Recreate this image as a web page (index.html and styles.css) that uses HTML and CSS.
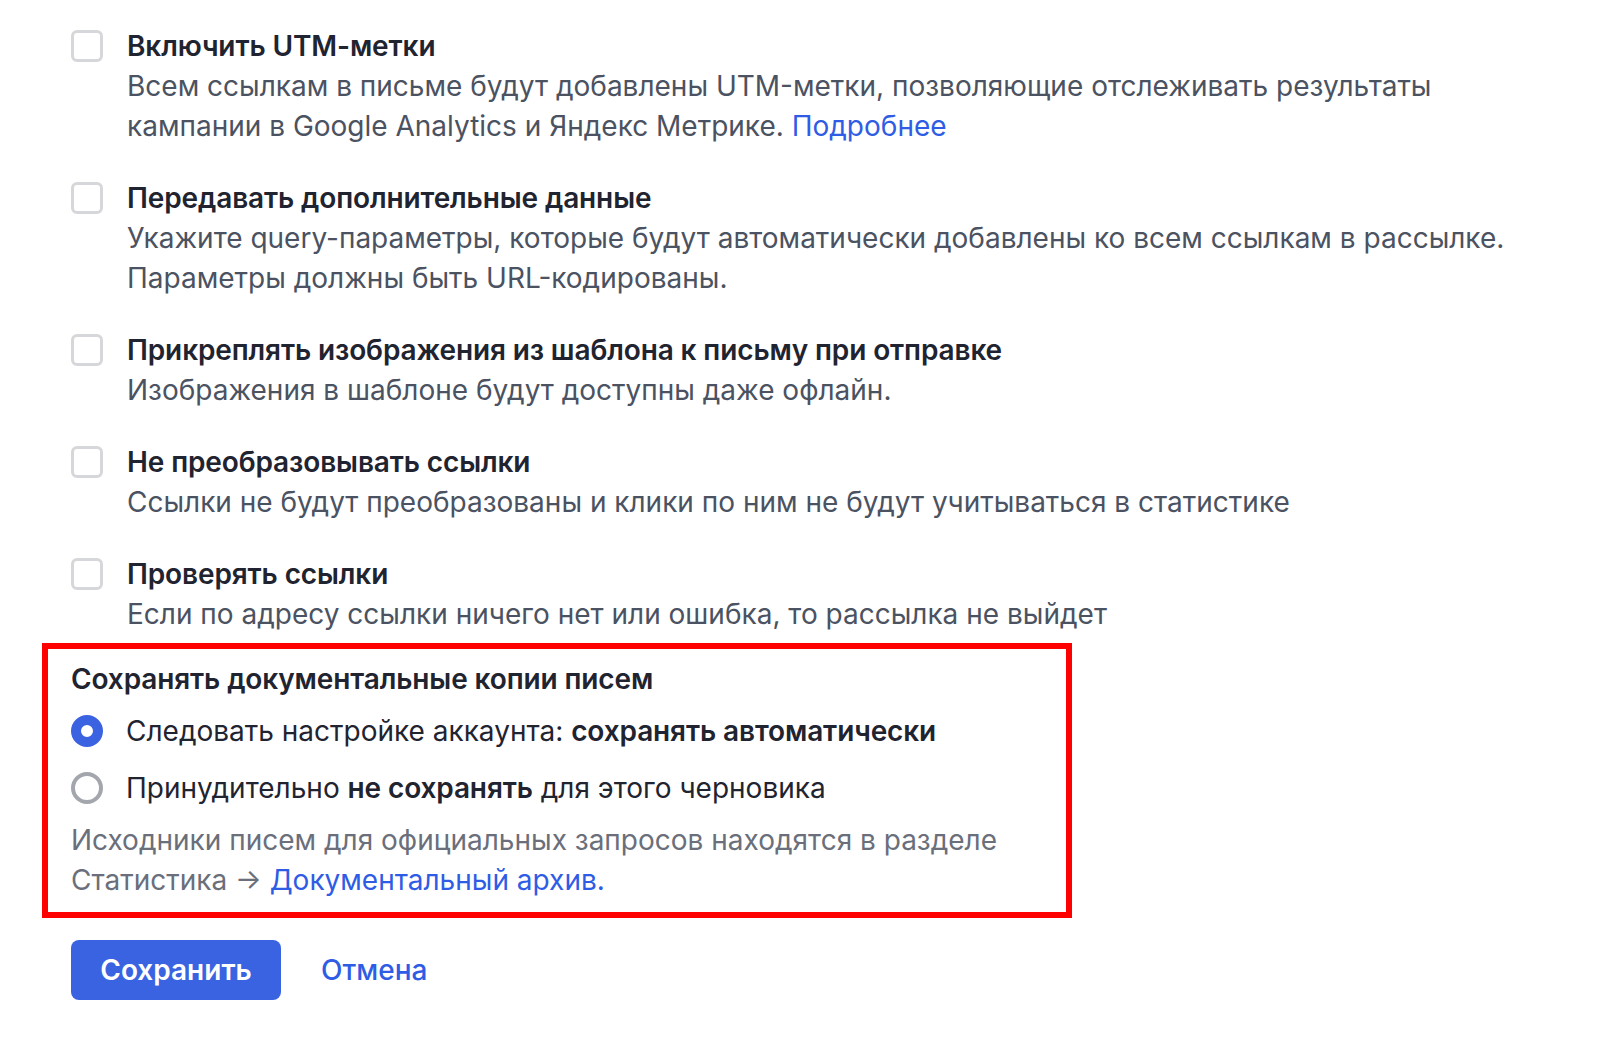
FILE: index.html
```html
<!DOCTYPE html>
<html lang="ru">
<head>
<meta charset="utf-8">
<title>Настройки</title>
<link rel="stylesheet" href="styles.css">
</head>
<body>
<div class="page">
  <div class="opts">
    <div class="opt">
      <span class="checkbox"></span>
      <div class="opt-body">
        <div class="opt-title">Включить UTM-метки</div>
        <div class="opt-desc">Всем ссылкам в письме будут добавлены UTM-метки, позволяющие отслеживать результаты<br>кампании в Google Analytics и Яндекс Метрике. <a class="link" href="#">Подробнее</a></div>
      </div>
    </div>
    <div class="opt">
      <span class="checkbox"></span>
      <div class="opt-body">
        <div class="opt-title">Передавать дополнительные данные</div>
        <div class="opt-desc">Укажите query-параметры, которые будут автоматически добавлены ко всем ссылкам в рассылке.<br>Параметры должны быть URL-кодированы.</div>
      </div>
    </div>
    <div class="opt">
      <span class="checkbox"></span>
      <div class="opt-body">
        <div class="opt-title">Прикреплять изображения из шаблона к письму при отправке</div>
        <div class="opt-desc">Изображения в шаблоне будут доступны даже офлайн.</div>
      </div>
    </div>
    <div class="opt">
      <span class="checkbox"></span>
      <div class="opt-body">
        <div class="opt-title">Не преобразовывать ссылки</div>
        <div class="opt-desc">Ссылки не будут преобразованы и клики по ним не будут учитываться в статистике</div>
      </div>
    </div>
    <div class="opt">
      <span class="checkbox"></span>
      <div class="opt-body">
        <div class="opt-title">Проверять ссылки</div>
        <div class="opt-desc">Если по адресу ссылки ничего нет или ошибка, то рассылка не выйдет</div>
      </div>
    </div>
  </div>

  <div class="archive">
    <div class="archive-title">Сохранять документальные копии писем</div>
    <div class="radio-row">
      <span class="radio radio-on"></span>
      <span class="radio-label">Следовать настройке аккаунта: <b>сохранять автоматически</b></span>
    </div>
    <div class="radio-row">
      <span class="radio"></span>
      <span class="radio-label">Принудительно <b>не сохранять</b> для этого черновика</span>
    </div>
    <div class="archive-note">Исходники писем для официальных запросов находятся в разделе<br>Статистика → <a class="link" href="#">Документальный архив.</a></div>
  </div>

  <div class="actions">
    <button class="btn-primary" type="button">Сохранить</button>
    <a class="link cancel" href="#">Отмена</a>
  </div>
</div>
</body>
</html>
```

FILE: styles.css
```css
html, body {
  margin: 0;
  padding: 0;
  background: #ffffff;
}

body {
  font-family: Inter, "Noto Sans", "Liberation Sans", sans-serif;
  font-size: 28px;
  line-height: 40px;
  color: #1f2430;
}

.page {
  padding: 26px 0 0 71px;
}

.opts {
  display: flex;
  flex-direction: column;
  gap: 32px;
}

.opt {
  display: flex;
  align-items: flex-start;
}

.checkbox {
  flex: none;
  width: 32px;
  height: 32px;
  box-sizing: border-box;
  border: 3px solid #d6d7db;
  border-radius: 6px;
  margin-top: 4px;
  margin-right: 24px;
}

.opt-title {
  font-weight: 600;
  color: #1f2430;
  letter-spacing: -0.12px;
}

.opt-desc {
  color: #4b5261;
}

.link {
  color: #2f5ce5;
  text-decoration: none;
}

.archive {
  margin: 9px 0 0 -29px;
  width: 1030px;
  box-sizing: border-box;
  border: 6px solid #ff0000;
  padding: 10px 0 12px 23px;
}

.archive-title {
  font-weight: 600;
  color: #1f2430;
  letter-spacing: -0.12px;
}

.radio-row {
  display: flex;
  align-items: center;
  margin-top: 12px;
}

.radio-row + .radio-row {
  margin-top: 17px;
}

.radio {
  flex: none;
  width: 32px;
  height: 32px;
  box-sizing: border-box;
  border: 4px solid #a3a6ad;
  border-radius: 50%;
  margin-right: 23px;
}

.radio-on {
  border: 10px solid #3b63e1;
  background: #ffffff;
}

.radio-label b {
  font-weight: 600;
  letter-spacing: -0.12px;
}

.archive-note {
  margin-top: 12px;
  color: #6a6f7b;
}

.actions {
  display: flex;
  align-items: center;
  margin-top: 22px;
}

.btn-primary {
  font-family: inherit;
  font-size: 28px;
  font-weight: 600;
  line-height: 40px;
  color: #ffffff;
  background: #3a63e2;
  border: none;
  border-radius: 8px;
  height: 60px;
  width: 210px;
  padding: 0;
  margin-right: 40px;
}

.cancel {
  font-weight: 500;
}
```
